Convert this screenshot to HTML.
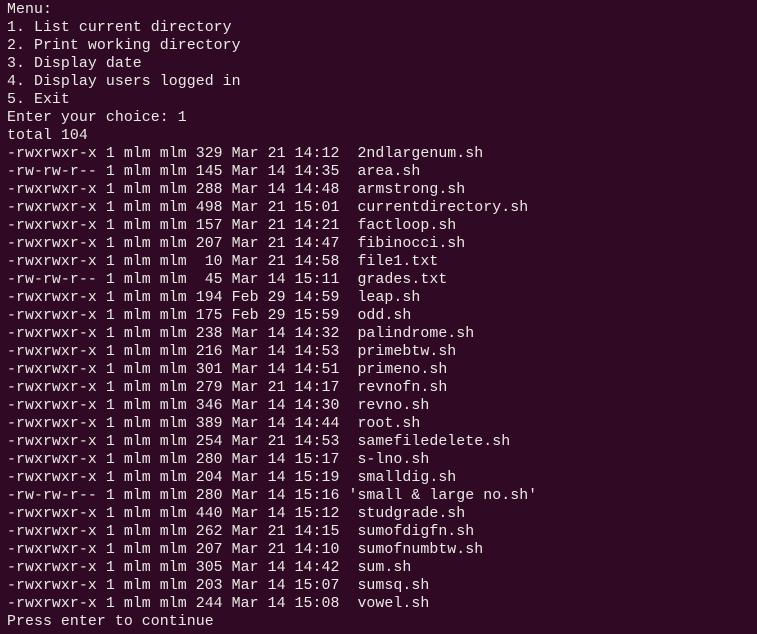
<!DOCTYPE html>
<html><head><style>
html,body{margin:0;padding:0;background:#300a24;width:757px;height:634px;overflow:hidden}
pre{margin:0;padding:0 0 0 7px;position:absolute;top:1px;font-family:"Liberation Mono",monospace;font-size:14.9px;letter-spacing:0.05px;line-height:18px;color:#e9e9e4}
</style></head><body><pre>Menu:
1. List current directory
2. Print working directory
3. Display date
4. Display users logged in
5. Exit
Enter your choice: 1
total 104
-rwxrwxr-x 1 mlm mlm 329 Mar 21 14:12  2ndlargenum.sh
-rw-rw-r-- 1 mlm mlm 145 Mar 14 14:35  area.sh
-rwxrwxr-x 1 mlm mlm 288 Mar 14 14:48  armstrong.sh
-rwxrwxr-x 1 mlm mlm 498 Mar 21 15:01  currentdirectory.sh
-rwxrwxr-x 1 mlm mlm 157 Mar 21 14:21  factloop.sh
-rwxrwxr-x 1 mlm mlm 207 Mar 21 14:47  fibinocci.sh
-rwxrwxr-x 1 mlm mlm  10 Mar 21 14:58  file1.txt
-rw-rw-r-- 1 mlm mlm  45 Mar 14 15:11  grades.txt
-rwxrwxr-x 1 mlm mlm 194 Feb 29 14:59  leap.sh
-rwxrwxr-x 1 mlm mlm 175 Feb 29 15:59  odd.sh
-rwxrwxr-x 1 mlm mlm 238 Mar 14 14:32  palindrome.sh
-rwxrwxr-x 1 mlm mlm 216 Mar 14 14:53  primebtw.sh
-rwxrwxr-x 1 mlm mlm 301 Mar 14 14:51  primeno.sh
-rwxrwxr-x 1 mlm mlm 279 Mar 21 14:17  revnofn.sh
-rwxrwxr-x 1 mlm mlm 346 Mar 14 14:30  revno.sh
-rwxrwxr-x 1 mlm mlm 389 Mar 14 14:44  root.sh
-rwxrwxr-x 1 mlm mlm 254 Mar 21 14:53  samefiledelete.sh
-rwxrwxr-x 1 mlm mlm 280 Mar 14 15:17  s-lno.sh
-rwxrwxr-x 1 mlm mlm 204 Mar 14 15:19  smalldig.sh
-rw-rw-r-- 1 mlm mlm 280 Mar 14 15:16 'small &amp; large no.sh'
-rwxrwxr-x 1 mlm mlm 440 Mar 14 15:12  studgrade.sh
-rwxrwxr-x 1 mlm mlm 262 Mar 21 14:15  sumofdigfn.sh
-rwxrwxr-x 1 mlm mlm 207 Mar 21 14:10  sumofnumbtw.sh
-rwxrwxr-x 1 mlm mlm 305 Mar 14 14:42  sum.sh
-rwxrwxr-x 1 mlm mlm 203 Mar 14 15:07  sumsq.sh
-rwxrwxr-x 1 mlm mlm 244 Mar 14 15:08  vowel.sh
Press enter to continue</pre></body></html>
